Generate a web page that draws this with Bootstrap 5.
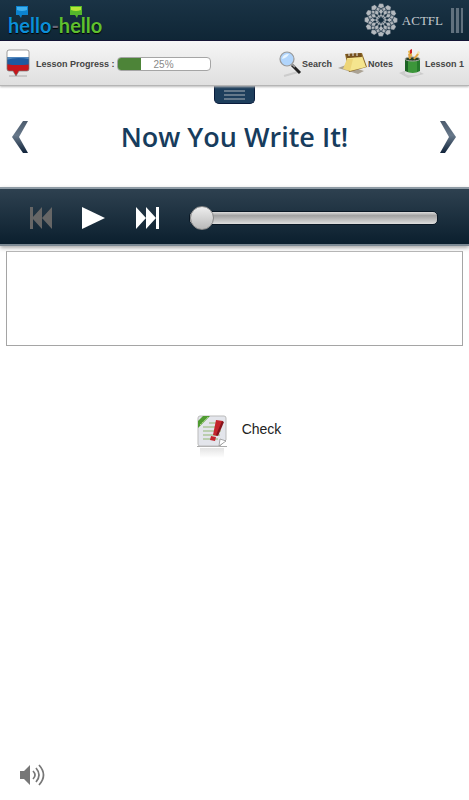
<!DOCTYPE html>
<html lang="en">
<head>
<meta charset="utf-8">
<meta name="viewport" content="width=device-width, initial-scale=1">
<title>hello-hello – Now You Write It!</title>
<link href="https://cdn.jsdelivr.net/npm/bootstrap@5.3.0/dist/css/bootstrap.min.css" rel="stylesheet">
<style>
body{font-family:"Liberation Sans",Arial,sans-serif;background:#fff;color:#222}
svg{display:block;flex:none}
a,button{text-decoration:none;color:inherit}
.bare{background:none;border:0;padding:0}
.topbar{height:41px;padding:0 6px 0 8px;background:linear-gradient(#1a3345,#0f2636);border-bottom:1px solid #08082c}
.brand{position:relative;font:700 20px/24px Lato,sans-serif;color:#0c8fd8;text-shadow:0 1px 1px #000;margin-top:10px}
.brand .sep{color:#667}
.brand .green{color:#5fc02f}
.bubble{position:absolute;top:-8px}
.bubble-a{left:8px}
.bubble-b{left:62px}
.org{font:13px/16px "Liberation Serif",serif;color:#c3c8cd;padding-top:2px}
.grip{width:12px;height:25px;background:repeating-linear-gradient(90deg,#61717e 0 3px,#1b3243 3px 5px)}
.tools{height:45px;padding:2px 5px 0 6px;font-size:9px;line-height:12px;font-weight:700;color:#444;background:linear-gradient(#f6f6f6,#dfdfdf);border-bottom:1px solid #b5b5b5;box-shadow:0 1px 2px #bbb;position:relative}
.tool-links{gap:6px}
.lesson-bar{width:94px;height:14px;border:1px solid #a5a5a5;border-radius:4px;background:#fff;position:relative;margin-left:2px}
.lesson-bar .progress-bar{background:#4d8438}
.lesson-bar .pct{position:absolute;inset:0;text-align:center;font-weight:400;line-height:13px;font-size:10px;color:#888}
.pull{width:41px;height:18px;gap:2px;background:#1d3e5c;border:1px solid #0a1c3c;border-top:0;border-radius:0 0 5px 5px}
.pull i{display:block;width:21px;height:2px;background:#64788a}
.heading{padding:0 12px;height:66px}
.heading h1{font:600 27px/34px "Open Sans",sans-serif;color:#173c5d}
.player{height:59px;margin-top:17px;padding:2px 31px 0 29px;background:linear-gradient(#2e4150,#0b1f2e);border-top:2px solid #8d9aa4;border-bottom:2px solid #7c8993;box-shadow:0 2px 4px #aaa}
.seek{-webkit-appearance:none;appearance:none;background:none;height:26px;margin:0;min-width:0}
.seek::-webkit-slider-runnable-track{height:14px;border:1px solid #0a1825;border-radius:5px;background:linear-gradient(#ddd,#a2a2a2 30%,#dedede)}
.seek::-webkit-slider-thumb{-webkit-appearance:none;width:24px;height:24px;margin-top:-6px;border-radius:50%;border:1px solid #888;background:linear-gradient(#eee,#b9b9b9)}
.answer-box{padding:5px 6px 0}
.answer{height:95px;border:1px solid #a5a5a5;border-top-color:#b5b5b5;border-radius:0;resize:none;box-shadow:none;padding:6px}
.check{font-size:14px;line-height:20px;gap:14px;margin-top:69px}
</style>
<script src="https://cdn.jsdelivr.net/npm/bootstrap@5.3.0/dist/js/bootstrap.bundle.min.js"></script>
</head>
<body class="min-vh-100 d-flex flex-column">
<header>
<div class="topbar d-flex align-items-center justify-content-between">
  <a href="#" class="brand"><svg class="bubble bubble-a" width="12" height="14" viewBox="0 0 12 14"><path d="M0 1h12v9H6l-1 3-2-3H0z" fill="#0c83cf"/><path d="M1 2h10v3Q6 7 1 5z" fill="#3fb0ee"/></svg><svg class="bubble bubble-b" width="12" height="14" viewBox="0 0 12 14"><path d="M0 1h12v9H8l-1 3-2-3H0z" fill="#55b82b"/><path d="M1 2h10v3Q6 7 1 5z" fill="#b6e638"/></svg>hello<span class="sep">-</span><span class="green">hello</span></a>
  <div class="d-flex align-items-center">
    <svg width="34" height="34" viewBox="-17 -17 34 34" fill="#b4b9be" stroke="#20384a" stroke-width=".3"><defs><g id="petal"><path d="M0-2 1.400-4.500 0-6.500-1.400-4.500z"/><path d="M0-5.500 2.300-8.500 0-11.500-2.300-8.500z"/><path d="M2.500-8.500 4.400-11 3-13 .8-11.200z"/><path d="M-2.500-8.500-4.400-11-3-13-.8-11.200z"/><path d="M0-11.500 3.200-13.300 2.200-16.300-1.600-16.500-3.200-13.300z"/></g></defs>
    <use href="#petal"/><use href="#petal" transform="rotate(30)"/><use href="#petal" transform="rotate(60)"/><use href="#petal" transform="rotate(90)"/><use href="#petal" transform="rotate(120)"/><use href="#petal" transform="rotate(150)"/><use href="#petal" transform="rotate(180)"/><use href="#petal" transform="rotate(210)"/><use href="#petal" transform="rotate(240)"/><use href="#petal" transform="rotate(270)"/><use href="#petal" transform="rotate(300)"/><use href="#petal" transform="rotate(330)"/></svg>
    <span class="org ms-1 me-2">ACTFL</span>
    <span class="grip"></span>
  </div>
</div>
<nav class="tools d-flex align-items-center justify-content-between" aria-label="Lesson tools">
  <div class="d-flex align-items-center">
    <svg class="me-1" width="26" height="30" viewBox="0 0 26 30"><defs><clipPath id="fl"><path d="M3 1h18q2 0 2 2v17q0 2-2 2h-8l-3 5-3-5H3q-2 0-2-2V3q0-2 2-2z"/></clipPath></defs><path d="M3 27h18" stroke="#aaa" stroke-width="1"/><g clip-path="url(#fl)"><path fill="#fff" d="M0 0h26v10H0z"/><path fill="#1e5a9f" d="M0 8h26v9H0z"/><path fill="#4f86bd" d="M0 8h26v3Q12 7 0 11z"/><path fill="#c5161b" d="M0 15q12 2 26 0v14H0z"/></g><path d="M3 1h18q2 0 2 2v17q0 2-2 2h-8l-3 5-3-5H3q-2 0-2-2V3q0-2 2-2z" fill="none" stroke="#777" stroke-width=".7"/></svg>
    <span>Lesson Progress :</span>
    <div class="lesson-bar progress" role="progressbar" aria-label="Lesson progress" aria-valuenow="25" aria-valuemin="0" aria-valuemax="100"><div class="progress-bar" style="width:25%"></div><span class="pct">25%</span></div>
  </div>
  <div class="tool-links d-flex align-items-center">
    <a href="#" class="d-flex align-items-center"><svg width="24" height="28" viewBox="0 0 24 28"><path d="M6 26 20 22" stroke="#ccc" stroke-width="2"/><path d="m14 15 8 8" stroke="#222" stroke-width="3"/><path d="m14 14 3 3" stroke="#999" stroke-width="2"/><circle cx="9" cy="9" r="7" fill="#b1d5fc" stroke="#999" stroke-width="1.200"/><path d="M4 9q1-5 7-5-2 4-7 5" fill="#e8f5ff"/></svg>Search</a>
    <a href="#" class="d-flex align-items-center"><svg width="30" height="28" viewBox="0 0 30 28"><path d="m0 18 8-3 18 6-6 3z" fill="#aaa294"/><path d="m7 4 17-1 5 14-18 5z" fill="#8f6c2b"/><path d="m9 8 15-2 4 11-16 4z" fill="#f5e58e"/><path d="m8 4 15-1 1 4-15 1z" fill="#75501e"/><path d="m9 9-4 10 7 2 3-12z" fill="#edd578"/><path d="M11 3v3m4-3v3m4-4v4" stroke="#eee"/></svg>Notes</a>
    <a href="#" class="d-flex align-items-center"><svg width="26" height="30" viewBox="0 0 26 30"><path d="m0 24 5-2h14l6 3-16 4z" fill="#ccc"/><path d="m11 10-2-8 3-1 2 9z" fill="#e8b44c"/><path d="m15 10 4-8 2 1-3 8z" fill="#f2e3b0"/><path d="m11 1 2-1v4l-2 1z" fill="#c22"/><path d="M6 10v13q8 4 15 0V10z" fill="#3c963a"/><path d="M6 10v13l3 1V10z" fill="#1c6224"/><path d="M18 11h3v12l-3 1z" fill="#267a2c"/><path d="M6 22q8 4 15 0v3q-8 3-15 0z" fill="#ddd"/><ellipse cx="13.500" cy="10" rx="7.500" ry="2" fill="#263f24" stroke="#aaa"/><path d="m11 10-1-5m5 5 4-5" stroke="#e1a443" stroke-width="2"/></svg>Lesson 1</a>
  </div>
</nav>
<div class="d-flex justify-content-center"><button class="bare pull d-flex flex-column align-items-center justify-content-center" type="button" aria-label="Open menu"><i></i><i></i><i></i></button></div>
</header>
<main class="flex-grow-1">
<svg width="0" height="0"><defs><linearGradient id="steel" x1="0" y1="0" x2="0" y2="1"><stop stop-color="#4c5b6d"/><stop offset=".45" stop-color="#67788a"/><stop offset="1" stop-color="#10233a"/></linearGradient></defs></svg>
<div class="heading d-flex align-items-center justify-content-between">
  <button class="bare" type="button" aria-label="Previous"><svg width="17" height="32" viewBox="0 0 17 32"><path d="M11 0h5L7 16l9 16h-5L0 16z" fill="url(#steel)"/></svg></button>
  <h1 class="m-0">Now You Write It!</h1>
  <button class="bare" type="button" aria-label="Next"><svg width="17" height="32" viewBox="0 0 17 32"><path d="M5 0H0l9 16L0 32h5l11-16z" fill="url(#steel)"/></svg></button>
</div>
<section class="player d-flex align-items-center" aria-label="Audio player">
  <button class="bare" type="button" aria-label="Rewind"><svg width="24" height="22" viewBox="0 0 24 22" fill="#666"><path d="M1 0h3v22H1zM13 0v22L3 11zM23 0v22L13 11z"/></svg></button>
  <button class="bare ms-4" type="button" aria-label="Play"><svg width="32" height="22" viewBox="0 0 32 22"><path d="m5 0 23 11L5 22z" fill="#fff"/></svg></button>
  <button class="bare ms-4" type="button" aria-label="Forward"><svg width="32" height="22" viewBox="0 0 32 22" fill="#fff"><path d="m3 0 10 11L3 22zM13 0l10 11-10 11zM23 0h3v22h-3z"/></svg></button>
  <input class="seek flex-grow-1 ms-4" type="range" value="0" aria-label="Position">
</section>
<div class="answer-box"><textarea class="form-control answer" aria-label="Your answer"></textarea></div>
<div class="d-flex justify-content-center ps-2"><button class="bare check d-flex" type="button"><svg width="32" height="46" viewBox="0 0 32 46"><defs><linearGradient id="refl" x1="0" y1="0" x2="0" y2="1"><stop stop-color="#e4e4e4"/><stop offset="1" stop-color="#fff"/></linearGradient></defs><path d="M4 33h24v10H4z" fill="url(#refl)"/><path d="M1 31.500h30" stroke="#aaa"/><path d="M4 1h24q2 0 2 2v22l-6 6H4q-2 0-2-2V3q0-2 2-2z" fill="#e3e5eb" stroke="#bbb"/><path d="M7 12h18M7 16h18M7 20h17M7 24h15M13 8h10" stroke="#adc69a" stroke-width="1.500"/><path d="M2 13V6l5-5h7z" fill="#4f9b31"/><path d="m4 10 8-8" stroke="#b9df90" stroke-dasharray="2 1"/><path d="m20 5 7 1-6 15-4-1zM15 21l5 1-1 4-5-1z" fill="#c4252c"/><path d="m26 6 2 1-6 14-2-1z" fill="#86131b"/><path d="m23 31 1-7 6 2z" fill="#fff" stroke="#888" stroke-width=".7"/></svg><span class="pt-1">Check</span></button></div>
</main>
<footer class="px-3"><button class="bare d-block mb-2" type="button" aria-label="Sound"><svg class="mb-1" width="32" height="26" viewBox="0 0 32 26"><path d="M4 9h4l6-6v20l-6-6H4z" fill="#777"/><path d="M17 9q4 4 0 8M20 6q6 7 0 14M23 3q9 10 0 20" fill="none" stroke="#777" stroke-width="1.700"/></svg></button></footer>
</body>
</html>
